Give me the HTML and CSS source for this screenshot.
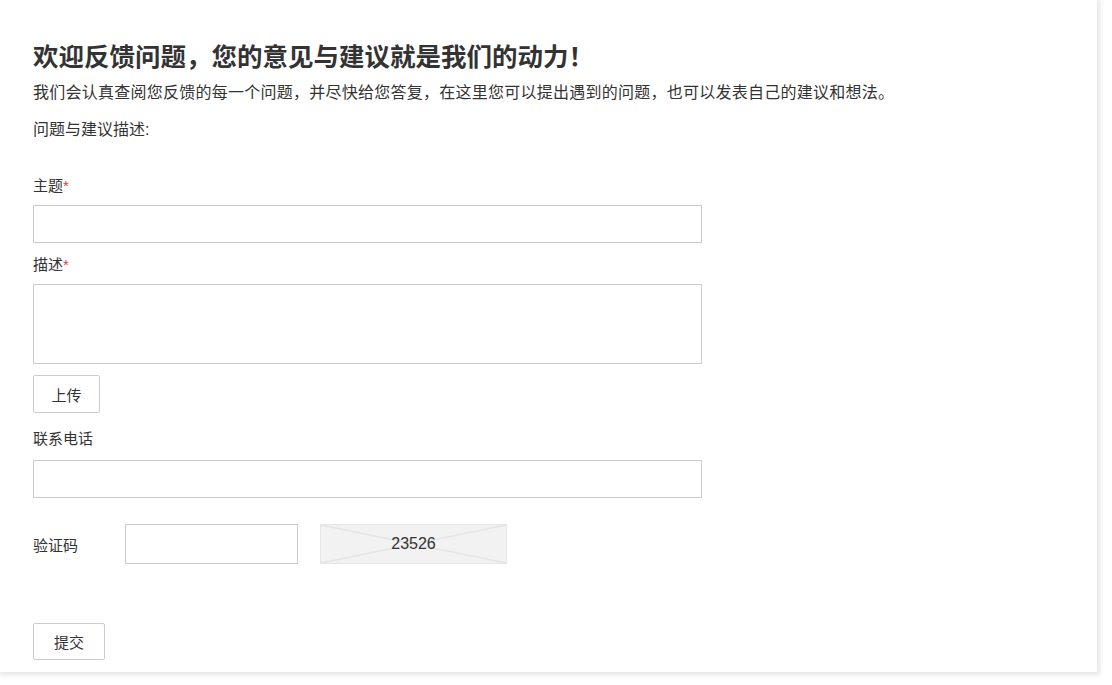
FILE: index.html
```html
<!DOCTYPE html>
<html lang="zh-CN">
<head>
    <meta charset="UTF-8">
    <meta name="viewport" content="width=device-width, initial-scale=1.0">
    <title>问题反馈</title>
    <link rel="stylesheet" href="styles.css">
</head>
<body>
    <div class="card">
        <h1 class="title">欢迎反馈问题，您的意见与建议就是我们的动力！</h1>
        <p class="intro">我们会认真查阅您反馈的每一个问题，并尽快给您答复，在这里您可以提出遇到的问题，也可以发表自己的建议和想法。</p>
        <p class="section">问题与建议描述:</p>

        <form class="form">
            <label class="label first" for="subject">主题<span class="req">*</span></label>
            <input class="field" type="text" id="subject">

            <label class="label" for="desc">描述<span class="req">*</span></label>
            <textarea class="field area" id="desc"></textarea>

            <button type="button" class="btn upload">上传</button>

            <label class="label phone" for="phone">联系电话</label>
            <input class="field" type="text" id="phone">

            <div class="captcha-row">
                <label class="captcha-label" for="code">验证码</label>
                <input class="captcha-input" type="text" id="code">
                <div class="captcha-img">
                    <svg class="cross" viewBox="0 0 100 100" preserveAspectRatio="none">
                        <line x1="0" y1="0" x2="100" y2="100" />
                        <line x1="0" y1="100" x2="100" y2="0" />
                    </svg>
                    <span class="code">23526</span>
                </div>
            </div>

            <button type="button" class="btn submit">提交</button>
        </form>
    </div>
</body>
</html>
```

FILE: styles.css
```css
body {
    margin: 0;
    padding: 0 0 13px;
    background-color: #fff;
    color: #333;
    font-family: "Liberation Sans", "Noto Sans CJK SC", sans-serif;
}

.card {
    width: 1097px;
    height: 672px;
    box-sizing: border-box;
    padding: 40px 33px 0;
    background-color: #fff;
    box-shadow: 1px 1px 5px 2px #e6e6e6;
}

.title {
    margin: 0;
    font-size: 25.5px;
    line-height: 34px;
    font-weight: bold;
    color: #333;
}

.intro {
    margin: 7px 0 0;
    font-size: 16px;
    line-height: 24px;
    letter-spacing: 0.25px;
}

.section {
    margin: 13px 0 0;
    font-size: 16px;
    line-height: 24px;
}

.form {
    display: flex;
    flex-direction: column;
    align-items: flex-start;
}

.label {
    margin-top: 10px;
    margin-bottom: 7px;
    font-size: 15px;
    line-height: 24px;
}

.label.first {
    margin-top: 32px;
}

.label.phone {
    margin-top: 14px;
    margin-bottom: 9px;
}

.req {
    color: #e4393c;
}

.field {
    width: 669px;
    height: 38px;
    box-sizing: border-box;
    border: 1px solid #ccc;
    border-radius: 0;
    padding: 6px 10px;
    font-size: 14px;
    font-family: inherit;
    outline: none;
}

.area {
    height: 80px;
    resize: none;
}

.btn {
    box-sizing: border-box;
    background-color: #fff;
    border: 1px solid #ccc;
    border-radius: 2px;
    color: #333;
    font-size: 15px;
    font-family: inherit;
    cursor: pointer;
}

.upload {
    margin-top: 11px;
    width: 67px;
    height: 38px;
}

.captcha-row {
    display: flex;
    align-items: center;
    margin-top: 26px;
}

.captcha-label {
    width: 92px;
    font-size: 15px;
}

.captcha-input {
    width: 173px;
    height: 40px;
    box-sizing: border-box;
    border: 1px solid #ccc;
    outline: none;
}

.captcha-img {
    position: relative;
    margin-left: 22px;
    width: 187px;
    height: 40px;
    box-sizing: border-box;
    border: 1px solid #e6e6e6;
    background-color: #f2f2f2;
    display: flex;
    justify-content: center;
    align-items: center;
}

.cross {
    position: absolute;
    left: 0;
    top: 0;
    width: 100%;
    height: 100%;
}

.cross line {
    stroke: #e4e4e4;
    stroke-width: 1.5;
    vector-effect: non-scaling-stroke;
}

.code {
    position: relative;
    font-size: 16px;
    color: #333;
}

.submit {
    margin-top: 59px;
    width: 72px;
    height: 37px;
}
```
